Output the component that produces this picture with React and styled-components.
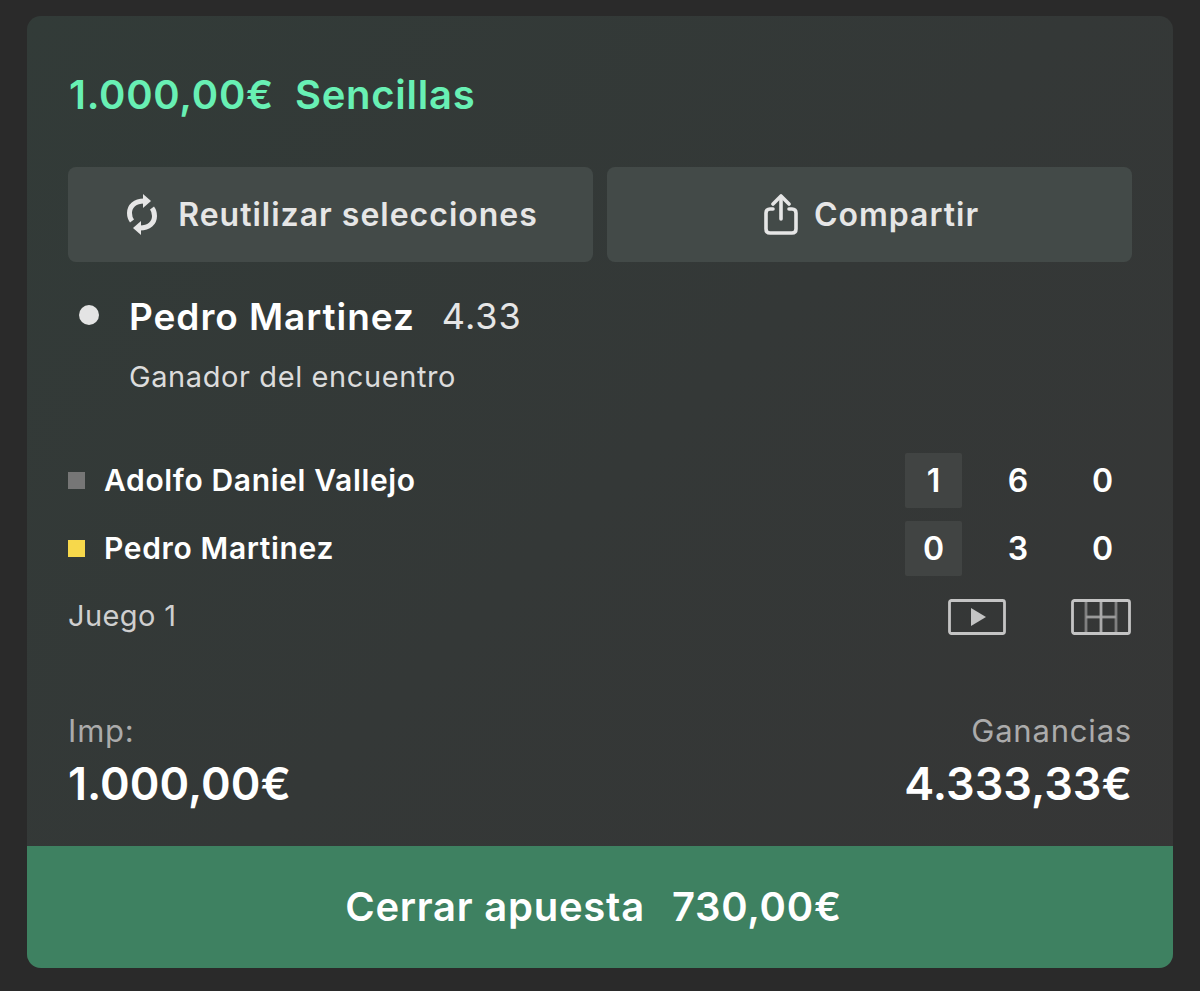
import React from 'react';
import styled, { createGlobalStyle } from 'styled-components';

const Global = createGlobalStyle`
  html, body {
    margin: 0;
    padding: 0;
    background: #2a2a2a;
    font-family: Inter, "Liberation Sans", sans-serif;
  }
`;

const Page = styled.div`
  width: 1200px;
  height: 991px;
  padding: 16px 27px 23px;
  box-sizing: border-box;
`;

const Card = styled.div`
  height: 952px;
  border-radius: 14px;
  overflow: hidden;
  display: flex;
  flex-direction: column;
  background: linear-gradient(135deg, #323b38 0%, #343837 50%, #363636 100%);
`;

const Body = styled.div`
  flex: 1;
  padding: 0 41px;
  display: flex;
  flex-direction: column;
`;

const Title = styled.div`
  height: 151px;
  display: flex;
  align-items: center;
  gap: 21px;
  padding: 5px 0 0 1px;
  font-size: 40px;
  font-weight: 600;
  letter-spacing: 0.75px;
  color: #68f0b4;
  box-sizing: border-box;
`;

const Actions = styled.div`
  display: flex;
  gap: 14px;
`;

const ActionButton = styled.div`
  flex: 1;
  height: 95px;
  padding-left: 4px;
  border-radius: 8px;
  background: #434a48;
  color: #e6e6e6;
  display: flex;
  align-items: center;
  justify-content: center;
  gap: ${p => p.$gap}px;
  font-size: 32px;
  font-weight: 600;
  letter-spacing: 1px;
`;

const Selection = styled.div`
  padding-top: 31px;
  height: 191px;
  box-sizing: border-box;
`;

const SelectionTop = styled.div`
  display: flex;
  align-items: center;
  height: 46px;
`;

const Dot = styled.span`
  width: 20px;
  height: 20px;
  border-radius: 50%;
  background: #e4e4e4;
  margin: 0 30px 2px 11px;
`;

const Runner = styled.span`
  font-size: 37px;
  font-weight: 600;
  letter-spacing: 0.95px;
  color: #fff;
  margin-right: 27px;
`;

const Price = styled.span`
  font-size: 36px;
  letter-spacing: 1px;
  color: #e6e6e6;
`;

const Market = styled.div`
  margin: 20px 0 0 61px;
  font-size: 29px;
  letter-spacing: 0.6px;
  color: #dcdcdc;
`;

const ScoreRow = styled.div`
  display: flex;
  align-items: center;
  height: 55px;
  margin-bottom: 13px;
`;

const Marker = styled.span`
  width: 17px;
  height: 17px;
  background: ${p => p.$color};
  margin-right: 19px;
`;

const Player = styled.span`
  flex: 1;
  padding-bottom: 2px;
  font-size: 30px;
  font-weight: 600;
  letter-spacing: 0.65px;
  color: #fff;
`;

const Scores = styled.div`
  display: flex;
  gap: 27.5px;
  margin-right: 1px;
`;

const Cell = styled.span`
  width: 57px;
  height: 55px;
  display: flex;
  align-items: center;
  justify-content: center;
  font-size: 32px;
  font-weight: 600;
  color: #fff;
  border-radius: 2px;
  background: ${p => (p.$active ? '#414443' : 'transparent')};
`;

const GameRow = styled.div`
  display: flex;
  align-items: center;
  height: 56px;
  padding-right: 1px;
`;

const GameLabel = styled.span`
  flex: 1;
  padding-bottom: 4px;
  font-size: 29px;
  letter-spacing: 0.4px;
  color: #cfcfcf;
`;

const GameIcon = styled.svg`
  display: block;
  margin-left: 65px;
`;

const Totals = styled.div`
  display: flex;
  justify-content: space-between;
  margin-top: 68px;
`;

const Total = styled.div`
  display: flex;
  flex-direction: column;
  align-items: ${p => (p.$right ? 'flex-end' : 'flex-start')};
`;

const TotalLabel = styled.span`
  font-size: 31px;
  line-height: 36px;
  letter-spacing: 0.8px;
  color: #ababab;
`;

const TotalValue = styled.span`
  font-size: 45px;
  line-height: 54px;
  font-weight: 600;
  color: #fff;
  margin-top: 8px;
`;

const CloseBar = styled.div`
  height: 122px;
  padding: 0 13px 2px 0;
  box-sizing: border-box;
  background: #3e8161;
  color: #fff;
  display: flex;
  align-items: center;
  justify-content: center;
  gap: 27px;
  font-size: 40px;
  font-weight: 600;
  letter-spacing: 0.75px;
`;

const ReuseIcon = () => (
  <svg width="30" height="41" viewBox="0 0 30 41" fill="none">
    <path d="M17 7 C8 7 2.5 12 2.5 19 C2.5 22 3.5 25 5 27" stroke="#e6e6e6" strokeWidth="5" />
    <path d="M13 34 C22 34 27.5 29 27.5 22 C27.5 19 26.5 16 25 14" stroke="#e6e6e6" strokeWidth="5" />
    <path d="M16 0 L24 7 L16 14 Z" fill="#e6e6e6" />
    <path d="M14 41 L6 34 L14 27 Z" fill="#e6e6e6" />
  </svg>
);

const ShareIcon = () => (
  <svg width="34" height="41" viewBox="0 0 34 41" fill="none" stroke="#e6e6e6" strokeWidth="3.6" strokeLinecap="round" strokeLinejoin="round">
    <path d="M9 15 H6 Q2 15 2 19 V35 Q2 39 6 39 H28 Q32 39 32 35 V19 Q32 15 28 15 H25" />
    <path d="M17 25 V3" />
    <path d="M9 10 L17 2 L25 10" />
  </svg>
);

const PlayIcon = () => (
  <GameIcon width="58" height="36" viewBox="0 0 58 36" fill="none">
    <rect x="1.5" y="1.5" width="55" height="33" rx="2" stroke="#c4c4c4" strokeWidth="2.8" />
    <path d="M23 9 L38 18 L23 27 Z" fill="#c4c4c4" />
  </GameIcon>
);

const CourtIcon = () => (
  <GameIcon width="60" height="36" viewBox="0 0 60 36" fill="none">
    <path d="M15 2 V34 M45 2 V34" stroke="#808080" strokeWidth="2.8" />
    <path d="M15 18 H45" stroke="#9a9a9a" strokeWidth="2.8" />
    <path d="M30 2 V34" stroke="#aaaaaa" strokeWidth="2.8" />
    <rect x="1.5" y="1.5" width="57" height="33" rx="2" stroke="#c4c4c4" strokeWidth="2.8" />
  </GameIcon>
);

const players = [
  { name: 'Adolfo Daniel Vallejo', color: '#767676', scores: [1, 6, 0] },
  { name: 'Pedro Martinez', color: '#f7d84b', scores: [0, 3, 0] },
];

export default function App() {
  return (
    <Page>
      <Global />
      <Card>
        <Body>
          <Title>
            <span>1.000,00€</span>
            <span>Sencillas</span>
          </Title>
          <Actions>
            <ActionButton $gap={21}>
              <ReuseIcon />
              Reutilizar selecciones
            </ActionButton>
            <ActionButton $gap={16}>
              <ShareIcon />
              Compartir
            </ActionButton>
          </Actions>
          <Selection>
            <SelectionTop>
              <Dot />
              <Runner>Pedro Martinez</Runner>
              <Price>4.33</Price>
            </SelectionTop>
            <Market>Ganador del encuentro</Market>
          </Selection>
          {players.map(player => (
            <ScoreRow key={player.name}>
              <Marker $color={player.color} />
              <Player>{player.name}</Player>
              <Scores>
                {player.scores.map((score, i) => (
                  <Cell key={i} $active={i === 0}>{score}</Cell>
                ))}
              </Scores>
            </ScoreRow>
          ))}
          <GameRow>
            <GameLabel>Juego 1</GameLabel>
            <PlayIcon />
            <CourtIcon />
          </GameRow>
          <Totals>
            <Total>
              <TotalLabel>Imp:</TotalLabel>
              <TotalValue>1.000,00€</TotalValue>
            </Total>
            <Total $right>
              <TotalLabel>Ganancias</TotalLabel>
              <TotalValue>4.333,33€</TotalValue>
            </Total>
          </Totals>
        </Body>
        <CloseBar>
          <span>Cerrar apuesta</span>
          <span>730,00€</span>
        </CloseBar>
      </Card>
    </Page>
  );
}
